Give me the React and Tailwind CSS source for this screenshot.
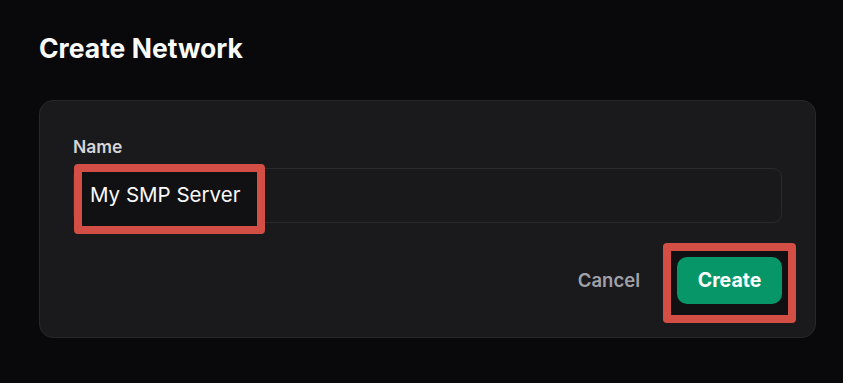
import React from 'react';

const App = () => {
    return (
        <div
            className="w-[843px] h-[383px] bg-[#09090b] text-white px-[39px] pt-[32px] overflow-hidden"
            style={{ fontFamily: 'Inter, "Liberation Sans", sans-serif' }}
        >
            {/* Title */}
            <h1 className="text-[26.5px] leading-[32px] font-bold text-[#fafafa]">Create Network</h1>

            {/* Card */}
            <div className="mt-[36px] w-[777px] h-[238px] rounded-[14px] border border-[#27272a] bg-[#1a1a1c] px-[33px] pt-[35px]">
                <label className="block text-[17.5px] leading-[22px] font-semibold text-[#d4d4d8]">Name</label>

                {/* Input */}
                <div className="relative mt-[10px] h-[55px] rounded-[9px] border border-[#2a2a2e] bg-[#19191b] flex items-center pl-[16px]">
                    <span className="relative z-10 text-[20.5px] text-[#fafafa]">My SMP Server</span>
                    <div className="absolute left-[0px] top-[-5px] w-[191px] h-[70px] rounded-[4px] border-[8px] border-[#d34f45] bg-[#111113]"></div>
                </div>

                {/* Actions */}
                <div className="mt-[34px] flex items-center justify-end gap-[37px]">
                    <button className="text-[18.5px] font-semibold text-[#a1a1aa]">Cancel</button>
                    <div className="relative">
                        <div className="absolute left-[-14px] top-[-14px] w-[133px] h-[80px] rounded-[4px] border-[8px] border-[#d34f45] bg-[#111113]"></div>
                        <button className="relative z-10 w-[105px] h-[47px] rounded-[10px] bg-[#069668] text-[19.5px] font-bold text-white">
                            Create
                        </button>
                    </div>
                </div>
            </div>
        </div>
    );
};

export default App;
